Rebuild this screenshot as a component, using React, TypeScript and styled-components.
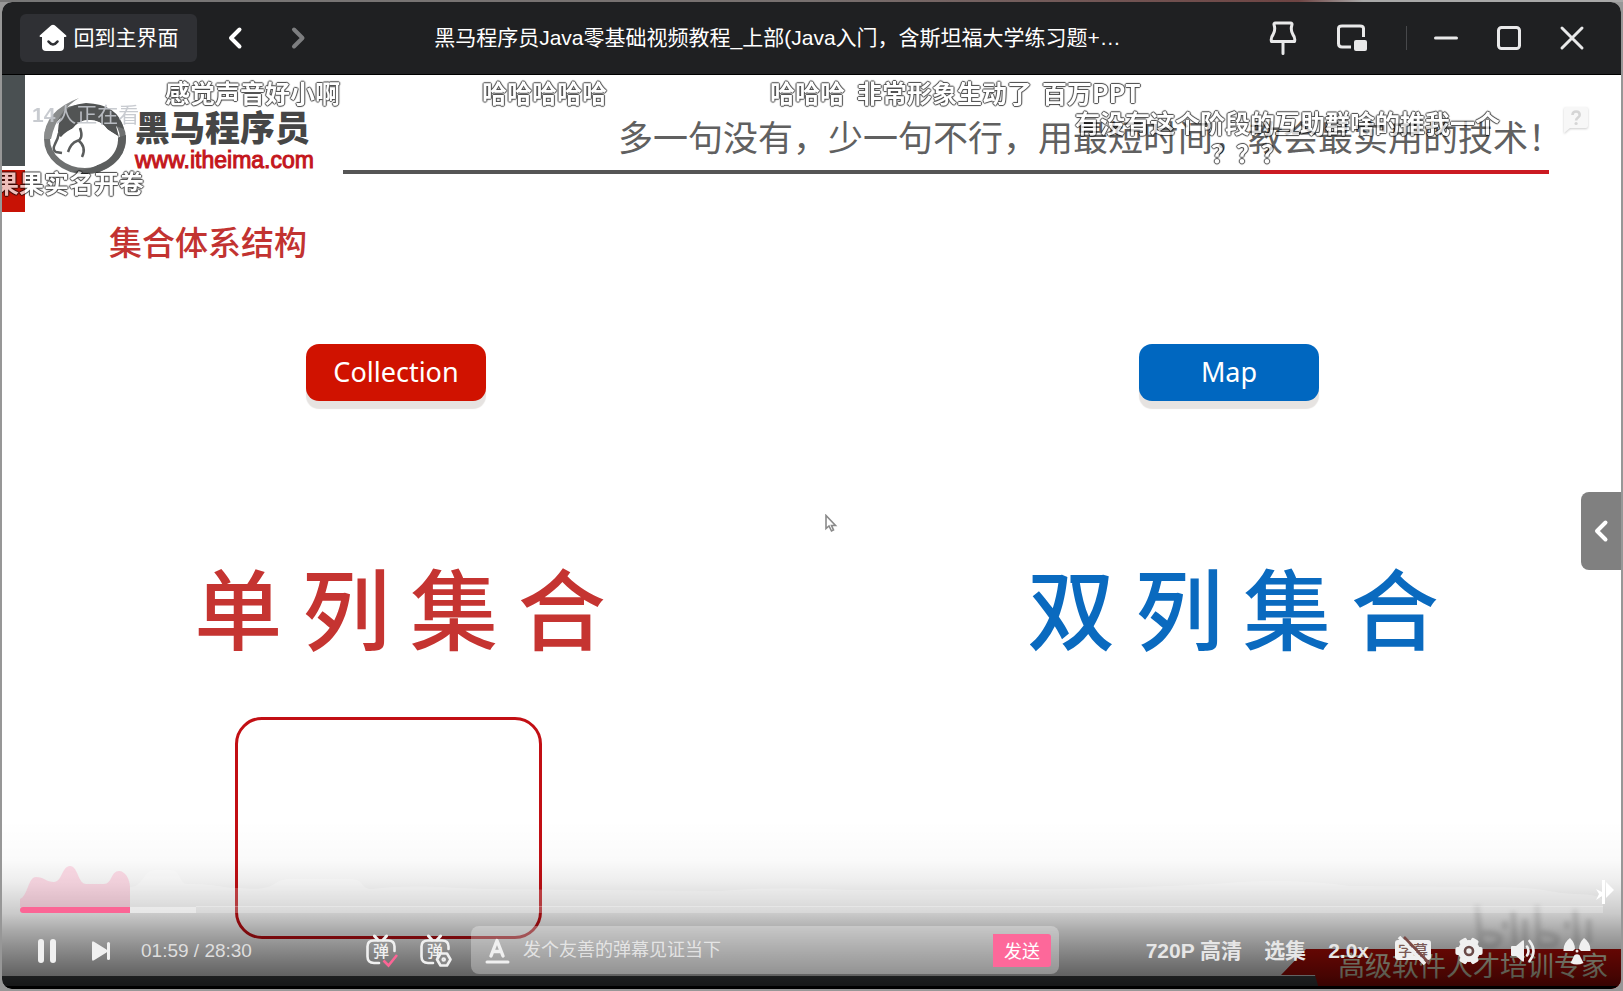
import React from "react";
import styled, { createGlobalStyle, css } from "styled-components";

const GlobalStyle = createGlobalStyle`
  *, *::before, *::after { box-sizing: border-box; }
  body {
    margin: 0;
    background: #979797;
    font-family: "Liberation Sans", "Noto Sans CJK SC", sans-serif;
  }
  button, input { font: inherit; color: inherit; margin: 0; }
`;

/* ---------- window ---------- */

const Desktop = styled.div`
  display: flex;
  min-height: 100vh;
  padding: 2px;
  background: linear-gradient(90deg, #777 0, #77706f 50%, #6e4443 80%, #a8a8a8 84%) top / 100% 2px no-repeat, #979797;
`;

const PlayerWindow = styled.div`
  flex: 1;
  min-width: 0;
  display: flex;
  flex-direction: column;
  border-radius: 10px;
  overflow: hidden;
  background: #fff;
`;

const TitleBar = styled.header`
  display: flex;
  align-items: center;
  height: 73px;
  flex: none;
  padding: 0 29px 1px 18px;
  background: #1f2022;
  border-bottom: 1px solid #000;
  color: #fff;
`;

const plainButton = css`
  display: flex;
  align-items: center;
  justify-content: center;
  padding: 0;
  border: 0;
  background: none;
  cursor: pointer;
`;

const HomeButton = styled.button`
  ${plainButton}
  width: 177px;
  height: 48px;
  gap: 7px;
  border-radius: 6px;
  background: #2f3034;
  color: #fff;
  font-size: 21px;
  line-height: 24px;
`;

const BarButton = styled.button`
  ${plainButton}
  width: 40px;
  height: 40px;
  color: #e9e9ea;
`;

const NavGroup = styled.nav`
  display: flex;
  gap: 23px;
  margin-left: 18px;
`;

const WindowTitle = styled.h1`
  flex: 1;
  min-width: 0;
  margin: 0;
  padding: 0 20px;
  overflow: hidden;
  white-space: nowrap;
  text-align: center;
  font-size: 21px;
  font-weight: 400;
  line-height: 28px;
`;

const ToolGroup = styled.div`
  display: flex;
  gap: 29px;
  padding: 0 34px 0 26px;
`;

const Divider = styled.span`
  width: 1px;
  height: 24px;
  margin-right: 19px;
  background: #47484b;
`;

const WindowButtons = styled.div`
  display: flex;
  gap: 23px;
`;

/* ---------- slide ---------- */

const Stage = styled.main`
  position: relative;
  flex: 1;
  display: flex;
  flex-direction: column;
  overflow: hidden;
  background: #fff;
`;

const SlideHead = styled.div`
  display: flex;
  height: 137px;
`;

const EdgeMarks = styled.div`
  width: 23px;
  display: flex;
  flex-direction: column;
  gap: 4px;
  &::before { content: ""; height: 91px; background: #4a5052; }
  &::after { content: ""; flex: 1; background: #c81205; }
`;

const Brand = styled.div`
  display: flex;
  width: 318px;
  gap: 7px;
  padding: 22px 0 0 17px;
`;

const BrandText = styled.div`
  padding-top: 13px;
`;

const BrandName = styled.div`
  color: #464646;
  font-size: 35px;
  font-weight: 900;
  line-height: 38px;
  white-space: nowrap;
`;

const BrandUrl = styled.div`
  color: #c4161c;
  font-size: 23px;
  line-height: 24px;
  -webkit-text-stroke: 1px #c4161c;
`;

const SloganBox = styled.div`
  flex: 1;
  min-width: 0;
  margin-right: 72px;
  padding-top: 37px;
`;

const Slogan = styled.p`
  margin: 0 0 10px;
  padding-left: 275px;
  color: #606060;
  font-family: "Noto Sans CJK SC", sans-serif;
  font-size: 35px;
  font-weight: 400;
  line-height: 48px;
  white-space: nowrap;
`;

const Rule = styled.div`
  height: 4px;
  background: linear-gradient(90deg, #555 76%, #cb1a22 76%);
`;

const SlideTitle = styled.h2`
  margin: 8px 0 0 107px;
  color: #c23331;
  font-size: 33px;
  font-weight: 500;
  line-height: 48px;
`;

const Columns = styled.div`
  flex: 1;
  display: flex;
  justify-content: space-between;
  padding: 76px 172px 0 174px;
`;

const Column = styled.section`
  width: 440px;
  display: flex;
  flex-direction: column;
  align-items: center;
`;

const TypeLabel = styled.div<{ $color: string }>`
  width: 180px;
  height: 57px;
  border-radius: 13px;
  background: ${(p) => p.$color};
  box-shadow: 0 8px 1px #e6e3e1;
  color: #fff;
  font-family: "Noto Sans", sans-serif;
  font-size: 27px;
  line-height: 56px;
  text-align: center;
`;

const Caption = styled.div<{ $color: string }>`
  margin-top: 154px;
  padding-left: 8px;
  color: ${(p) => p.$color};
  font-family: "Noto Sans CJK SC", sans-serif;
  font-size: 88px;
  font-weight: 500;
  line-height: 100px;
  white-space: nowrap;
`;

const EmptyBox = styled.div`
  width: 307px;
  height: 222px;
  margin: 62px 16px 0 0;
  border: 3px solid #c20f14;
  border-radius: 27px;
`;

const SlideFoot = styled.footer`
  display: flex;
  align-items: flex-end;
  justify-content: flex-end;
  height: 40px;
  background: linear-gradient(#4c5052, #4c5052) bottom / 100% 13px no-repeat;
`;

const Ribbon = styled.div`
  width: 340px;
  height: 40px;
  padding-left: 57px;
  background: #b80c06;
  clip-path: polygon(25px 0, 100% 0, 100% 100%, 38px 100%, 34px 26px, 0 26px);
  color: #e8e8cc;
  font-family: "Noto Sans CJK SC", sans-serif;
  font-size: 27px;
  font-weight: 400;
  line-height: 32px;
  white-space: nowrap;
`;

/* ---------- overlays ---------- */

const Danmaku = styled.span<{ $x: number; $row: number }>`
  position: absolute;
  left: ${(p) => p.$x}px;
  top: ${(p) => 2 + p.$row * 30}px;
  color: #fff;
  font-family: "Noto Sans CJK SC", sans-serif;
  font-size: 25px;
  font-weight: 700;
  line-height: 30px;
  white-space: nowrap;
  text-shadow: 1px 0 1px #000, 0 1px 1px #000, 0 -1px 1px #000, -1px 0 1px #000;
  opacity: 0.72;
`;

const Watching = styled.span`
  position: absolute;
  left: 30px;
  top: 28px;
  color: #c3c6cc;
  font-size: 21px;
  line-height: 24px;
  opacity: 0.9;
`;

const FeedbackButton = styled.button`
  ${plainButton}
  position: absolute;
  right: 32px;
  top: 31px;
  filter: drop-shadow(0 1px 1px #ccc);
`;

const SideTab = styled.button`
  ${plainButton}
  position: absolute;
  right: 0;
  top: 417px;
  width: 40px;
  height: 78px;
  border-radius: 8px 0 0 8px;
  background: #808080;
  color: #fff;
`;

const Pointer = styled.svg`
  position: absolute;
  left: 822px;
  top: 439px;
`;

const Watermark = styled.svg`
  position: absolute;
  right: 26px;
  bottom: 36px;
  filter: blur(2px);
`;

const PlayMark = styled.svg`
  position: absolute;
  right: 6px;
  bottom: 84px;
`;

const Controls = styled.div`
  position: absolute;
  left: 0;
  right: 0;
  bottom: 0;
  padding-top: 42px;
  border-bottom: 3px solid #000;
  background: linear-gradient(
    rgba(0, 0, 0, 0) 0,
    rgba(0, 0, 0, 0.02) 40px,
    rgba(0, 0, 0, 0.07) 62px,
    rgba(0, 0, 0, 0.15) 80px,
    rgba(0, 0, 0, 0.21) 94px,
    rgba(0, 0, 0, 0.34) 111px,
    rgba(0, 0, 0, 0.45) 128px,
    rgba(0, 0, 0, 0.62) 156px,
    rgba(0, 0, 0, 0.7) 166px
  );
`;

const Timeline = styled.div`
  display: flex;
  flex-direction: column;
  padding: 0 18px;
`;

const HeatMap = styled.svg`
  width: 100%;
  height: 45px;
`;

const Seek = styled.input<{ $played: number; $buffered: number }>`
  appearance: none;
  width: 100%;
  height: 6px;
  border-radius: 3px 0 0 3px;
  background: linear-gradient(
    90deg,
    #fb6595 ${(p) => p.$played}%,
    rgba(255, 255, 255, 0.55) ${(p) => p.$played}%,
    rgba(255, 255, 255, 0.55) ${(p) => p.$buffered}%,
    rgba(255, 255, 255, 0.26) ${(p) => p.$buffered}%
  );
  &::-webkit-slider-thumb { appearance: none; width: 0; height: 0; }
`;

const ControlRow = styled.div`
  display: flex;
  align-items: center;
  padding: 13px 28px 12px 31px;
  color: #f0f0f0;
`;

const PlayGroup = styled.div`
  display: flex;
  align-items: center;
  flex: 0 0 333px;
  gap: 26px;
`;

const IconButton = styled.button<{ $w?: number }>`
  ${plainButton}
  width: ${(p) => p.$w ?? 32}px;
  height: 36px;
  padding-top: 2px;
`;

const Clock = styled.span`
  color: #dedede;
  font-size: 19px;
  line-height: 24px;
  padding-top: 2px;
  white-space: nowrap;
`;

const DanmakuGroup = styled.div`
  display: flex;
  gap: 22px;
  margin-right: 19px;
`;

const SendForm = styled.form`
  display: flex;
  align-items: center;
  flex: 0 1 588px;
  min-width: 0;
  height: 48px;
  padding: 0 8px 0 12px;
  border-radius: 8px;
  background: rgba(255, 255, 255, 0.3);
`;

const SendInput = styled.input`
  flex: 1;
  min-width: 0;
  height: 32px;
  margin: 0 10px 0 12px;
  padding: 0;
  border: 0;
  outline: 0;
  background: none;
  font-size: 18px;
  &::placeholder { color: rgba(255, 255, 255, 0.68); opacity: 1; }
`;

const SendButton = styled.button`
  ${plainButton}
  width: 58px;
  height: 33px;
  border-radius: 0 3px 3px 0;
  background: #fd689a;
  color: #fff;
  font-size: 18px;
`;

const TextOptions = styled.div`
  display: flex;
  align-items: center;
  gap: 22px;
  margin-left: auto;
  margin-right: 26px;
`;

const IconOptions = styled.div`
  display: flex;
  align-items: center;
  gap: 22px;
`;

const TextButton = styled.button`
  ${plainButton}
  padding-top: 2px;
  color: #e6e6e6;
  font-size: 21px;
  font-weight: 700;
  line-height: 28px;
  white-space: nowrap;
`;

/* ---------- drawings ---------- */

const line = { fill: "none", stroke: "currentColor", strokeLinecap: "round", strokeLinejoin: "round" } as const;

const Chevron = ({ dir, color }: { dir: "left" | "right"; color: string }) => (
  <svg width="16" height="24" viewBox="0 0 16 24" {...line} stroke={color} strokeWidth="4" aria-hidden>
    <path d={dir === "left" ? "M12.500 3.500L4 12l8.500 8.500" : "M4 3.500L12.500 12 4 20.500"} />
  </svg>
);

const HomeIcon = () => (
  <svg width="28" height="28" viewBox="0 0 28 28" aria-hidden>
    <path d="M12.300 1.300q1.700-1.300 3.400 0L27 11.200q1.200 1.800-.800 1.900H25V23q0 4-4 4H7q-4 0-4-4v-9.900H1.800Q-.200 13 1 11.200z" fill="#fff" />
    <path d="M9.500 17.500q4.500 6 9 0" fill="none" stroke="#2f3034" strokeWidth="2.600" strokeLinecap="round" />
  </svg>
);

const PinIcon = () => (
  <svg width="28" height="36" viewBox="0 0 28 36" {...line} strokeWidth="3" aria-hidden>
    <path d="M6.500 3h15q2 0 1.400 2-1.600 5 1 9.500 2.600 3.500 1.600 7h-23q-1-3.500 1.600-7 2.600-4.500 1-9.500-.600-2 1.400-2zM14 22v11.500" />
  </svg>
);

const PipIcon = () => (
  <svg width="32" height="30" viewBox="0 0 32 30" aria-hidden>
    <path d="M15 24H6q-3.500 0-3.500-3.500v-15Q2.500 3 6 3h18q3.500 0 3.500 2.500V14" {...line} strokeWidth="3" strokeLinecap="butt" />
    <rect x="18" y="17" width="13" height="11" rx="2" fill="currentColor" />
  </svg>
);

const MinIcon = () => (
  <svg width="24" height="24" viewBox="0 0 24 24" {...line} strokeWidth="3" aria-hidden><path d="M1.500 12h21" /></svg>
);
const MaxIcon = () => (
  <svg width="26" height="26" viewBox="0 0 26 26" {...line} strokeWidth="3" aria-hidden><rect x="2.500" y="2.500" width="21" height="21" rx="3" /></svg>
);
const CloseIcon = () => (
  <svg width="26" height="26" viewBox="0 0 26 26" {...line} strokeWidth="3" aria-hidden><path d="M3 3l20 20M23 3L3 23" /></svg>
);

const HorseLogo = () => (
  <svg width="86" height="78" viewBox="0 0 86 78" aria-hidden>
    <ellipse cx="43" cy="42" rx="38" ry="32" fill="#fff" stroke="#6e7070" strokeWidth="6" />
    <path d="M84 38q1 26-27 37-14 4-27-1 38-1 41-32z" fill="#5c5e5e" />
    <path d="M16 34Q17 8 44 6q32 1 38 26l-8-3 3 11-12-8q-6-9-18-9-8 0-14 8-8 2-14 9-3-1-3-6z" fill="#525454" />
    <path d="M31 31q7-9 17-8 12 1 18 10l10 6q1 16-12 25-10 6-22 6-18-1-27-15 0-10 7-17z" fill="#fff" />
    <path d="M2 42Q2 14 37 1 15 14 9 42z" fill="#8a8c8c" />
    <path d="M17 36q-1 6-4 11-3 6 1 8l6 1M26 55q3-9 9-11 7-2 3-13M36 43q9 7 4 17" fill="none" stroke="#5a5c5c" strokeWidth="2.500" />
  </svg>
);

const FeedbackIcon = () => (
  <svg width="26" height="28" viewBox="0 0 26 28" aria-hidden>
    <path d="M3 1h20q2 0 2 2v17q0 2-2 2H7l-6 5V3q0-2 2-2z" fill="#f7f7f7" />
    <path d="M9.500 9q0-3.500 3.600-3.500T16.700 9c0 2.600-3.600 2.500-3.600 5.500" fill="none" stroke="#d5d5d5" strokeWidth="2.600" />
    <circle cx="13.100" cy="17.500" r="1.600" fill="#d5d5d5" />
  </svg>
);

const PauseIcon = () => (
  <svg width="20" height="24" viewBox="0 0 20 24" fill="currentColor" aria-hidden>
    <rect x="1" width="6" height="24" rx="3" /><rect x="13" width="6" height="24" rx="3" />
  </svg>
);

const NextIcon = () => (
  <svg width="20" height="20" viewBox="0 0 20 20" fill="currentColor" aria-hidden>
    <path d="M1 2q0-2.500 2-1.200l12.500 7.700q1.500 1.500 0 3L3 19.200Q1 20.500 1 18z" /><rect x="16" y="1" width="3" height="18" rx="1.500" />
  </svg>
);

const GlyphText = styled.text`
  font-family: "Noto Sans CJK SC", sans-serif;
  font-weight: 500;
`;

const DanmakuIcon = ({ mode }: { mode: "on" | "settings" }) => (
  <svg width="32" height="34" viewBox="0 0 32 34" aria-hidden>
    <g {...line} strokeWidth="3">
      <path d="M8.500 2l3.500 4M20.500 2L17 6" />
      <path
        d={`M13 29H8q-6.500 0-6.500-6.500v-10Q1.500 6.500 8 6.500h14q6.500 0 6.500 6V${mode === "on" ? 17 : 15}`}
        strokeWidth="2.600"
      />
    </g>
    <GlyphText x="7" y="23" fontSize="16" fill="currentColor">弹</GlyphText>
    {mode === "on" ? (
      <path d="M17.500 26.500l5 5L31 21" fill="none" stroke="#fb6595" strokeWidth="2.600" />
    ) : (
      <g {...line} strokeWidth="2.600">
        <path d="M20.500 19.500h6.500l3.500 6-3.500 6h-6.500L17 25.500z" fill="#888" /><circle cx="23.700" cy="25.500" r="1" />
      </g>
    )}
  </svg>
);

const FontIcon = () => (
  <svg width="26" height="26" viewBox="0 0 26 26" {...line} strokeWidth="3.400" aria-hidden>
    <path d="M7 18l6-15.500L19 18M9 13.500h8" /><path d="M3 24h21" strokeWidth="3" />
  </svg>
);

const SubtitleIcon = () => (
  <svg width="36" height="30" viewBox="0 0 36 30" aria-hidden>
    <rect y="4" width="36" height="20" rx="3" fill="currentColor" />
    <GlyphText x="3" y="20" fontSize="15" fill="#7a5a56">字幕</GlyphText>
    <path d="M9 1l25 26" stroke="#7a4a46" strokeWidth="2.600" />
    <path d="M4 1l26 27" stroke="currentColor" strokeWidth="3.600" />
  </svg>
);

const GearIcon = () => (
  <svg width="28" height="28" viewBox="0 0 28 28" aria-hidden>
    <g fill="currentColor">
      <circle cx="14" cy="14" r="11" />
      {[30, 90, 150, 210, 270, 330].map((a) => (
        <rect key={a} x="10" y="0.400" width="8" height="8" rx="2" transform={`rotate(${a} 14 14)`} />
      ))}
    </g>
    <circle cx="14" cy="14" r="4" fill="none" stroke="#6a4a48" strokeWidth="2.600" />
  </svg>
);

const VolumeIcon = () => (
  <svg width="28" height="26" viewBox="0 0 28 26" aria-hidden>
    <path d="M2 9q0-1 1-1h4l6-5q2-1.500 2 .500v19q0 2-2 .500l-6-5H3q-1 0-1-1z" fill="currentColor" />
    <path d="M18 8.500q3 4.500 0 9M20.500 3q8 10 0 20" {...line} strokeWidth="2.600" />
  </svg>
);

const FanIcon = () => (
  <svg width="30" height="28" viewBox="0 0 30 28" fill="currentColor" aria-hidden>
    <path d="M8 1q5 5 5 11l-2 2H1.500Q1 6 8 1zM22 1q-5 5-5 11l2 2h9.500Q29 6 22 1zM12.500 18q2.500-1.500 5 0l4 8q-6.500 3-13 0z" />
    <circle cx="15" cy="14" r="1.500" />
  </svg>
);

const Heat = () => (
  <HeatMap viewBox="0 0 1583 45" preserveAspectRatio="none" aria-hidden>
    <path d="M0 37C8 34 8 15 16 15C24 15 26 20 34 20C42 20 42 4 50 4C58 4 58 22 66 22H84C92 22 91 9 99 9C105 9 110 17 110 25V45H0z" fill="#fb6595" fillOpacity="0.220" />
    <path d="M110 25C124 25 122 8 136 8H150C162 8 158 22 168 22C200 22 200 26 220 26C260 30 250 17 270 17H330C345 17 340 27 352 27C400 22 420 26 470 27L700 29Q760 24 830 28L1060 27Q1170 24 1220 20Q1280 17 1330 24L1480 25C1530 26 1530 31 1555 32Q1583 32 1583 40V45H110z" fill="#fff" fillOpacity="0.200" />
    <path d="M176 44.500H1583" stroke="#fff" strokeOpacity="0.300" />
  </HeatMap>
);

const comments = [
  { text: "感觉声音好小啊", x: 163, row: 0 },
  { text: "哈哈哈哈哈", x: 480, row: 0 },
  { text: "哈哈哈", x: 768, row: 0 },
  { text: "非常形象生动了", x: 855, row: 0 },
  { text: "百万PPT", x: 1040, row: 0 },
  { text: "有没有这个阶段的互助群啥的推我一个", x: 1073, row: 1 },
  { text: "？？？", x: 1209, row: 2 },
  { text: "果果实名开卷", x: -8, row: 3 },
];

const DURATION = 1710;
const POSITION = 119;

export default function App() {
  return (
    <>
      <GlobalStyle />
      <Desktop lang="zh-CN">
        <PlayerWindow>
          <TitleBar>
            <HomeButton><HomeIcon />回到主界面</HomeButton>
            <NavGroup>
              <BarButton aria-label="后退"><Chevron dir="left" color="#fff" /></BarButton>
              <BarButton aria-label="前进"><Chevron dir="right" color="#7d7e80" /></BarButton>
            </NavGroup>
            <WindowTitle>黑马程序员Java零基础视频教程_上部(Java入门，含斯坦福大学练习题+…</WindowTitle>
            <ToolGroup>
              <BarButton aria-label="置顶"><PinIcon /></BarButton>
              <BarButton aria-label="小窗"><PipIcon /></BarButton>
            </ToolGroup>
            <Divider />
            <WindowButtons>
              <BarButton aria-label="最小化"><MinIcon /></BarButton>
              <BarButton aria-label="最大化"><MaxIcon /></BarButton>
              <BarButton aria-label="关闭"><CloseIcon /></BarButton>
            </WindowButtons>
          </TitleBar>

          <Stage>
            <SlideHead>
              <EdgeMarks />
              <Brand>
                <HorseLogo />
                <BrandText>
                  <BrandName>黑马程序员</BrandName>
                  <BrandUrl>www.itheima.com</BrandUrl>
                </BrandText>
              </Brand>
              <SloganBox>
                <Slogan>多一句没有，少一句不行，用最短时间，教会最实用的技术！</Slogan>
                <Rule />
              </SloganBox>
            </SlideHead>
            <SlideTitle>集合体系结构</SlideTitle>
            <Columns>
              <Column>
                <TypeLabel $color="#d01200">Collection</TypeLabel>
                <Caption $color="#c53431">单 列 集 合</Caption>
                <EmptyBox />
              </Column>
              <Column>
                <TypeLabel $color="#0067c0">Map</TypeLabel>
                <Caption $color="#0a6abf">双 列 集 合</Caption>
              </Column>
            </Columns>
            <SlideFoot>
              <Ribbon>高级软件人才培训专家</Ribbon>
            </SlideFoot>

            <Watermark width="124" height="50" viewBox="0 0 124 50" fill="none" stroke="#777" strokeOpacity="0.220" strokeWidth="6" aria-hidden>
              <path d="M6 2l4 40q14 4 18-4t-16-8M42 8l2 34M54 16v24M66 2l2 40q16 2 18-4t-16-8M104 6l2 36M118 16v24M34 18v8M96 18v8" />
            </Watermark>
            <Pointer width="14" height="20" viewBox="0 0 14 20" aria-hidden>
              <path d="M2 1.500v13l3-2.500 2.500 5 2-1-2-4.500h4z" fill="#fff" stroke="#8a8a8a" strokeWidth="1.600" />
            </Pointer>

            <Watching><b>14</b>人正在看</Watching>
            {comments.map((c) => (
              <Danmaku key={c.text} $x={c.x} $row={c.row}>{c.text}</Danmaku>
            ))}
            <FeedbackButton aria-label="反馈"><FeedbackIcon /></FeedbackButton>
            <SideTab aria-label="展开侧栏"><Chevron dir="left" color="#fff" /></SideTab>

            <Controls>
              <Timeline>
                <Heat />
                <Seek
                  type="range"
                  aria-label="播放进度"
                  min={0}
                  max={DURATION}
                  defaultValue={POSITION}
                  $played={(POSITION / DURATION) * 100}
                  $buffered={11.1}
                />
              </Timeline>
              <ControlRow>
                <PlayGroup>
                  <IconButton $w={28} aria-label="暂停"><PauseIcon /></IconButton>
                  <IconButton $w={28} aria-label="下一集"><NextIcon /></IconButton>
                  <Clock>01:59 / 28:30</Clock>
                </PlayGroup>
                <DanmakuGroup>
                  <IconButton aria-label="关闭弹幕"><DanmakuIcon mode="on" /></IconButton>
                  <IconButton aria-label="弹幕设置"><DanmakuIcon mode="settings" /></IconButton>
                </DanmakuGroup>
                <SendForm onSubmit={(e) => e.preventDefault()}>
                  <IconButton type="button" $w={28} aria-label="字体"><FontIcon /></IconButton>
                  <SendInput aria-label="弹幕" placeholder="发个友善的弹幕见证当下" />
                  <SendButton type="submit">发送</SendButton>
                </SendForm>
                <TextOptions>
                  <TextButton>720P 高清</TextButton>
                  <TextButton>选集</TextButton>
                  <TextButton>2.0x</TextButton>
                </TextOptions>
                <IconOptions>
                  <IconButton $w={36} aria-label="开启字幕"><SubtitleIcon /></IconButton>
                  <IconButton aria-label="设置"><GearIcon /></IconButton>
                  <IconButton aria-label="音量"><VolumeIcon /></IconButton>
                  <IconButton aria-label="清爽模式"><FanIcon /></IconButton>
                </IconOptions>
              </ControlRow>
            </Controls>
            <PlayMark width="20" height="26" viewBox="0 0 20 26" fill="#fff" aria-hidden>
              <path d="M7 1h3v24H7zM11 3l8 8-8 8zM1 10l6 3v4l-6 4 3-6z" />
            </PlayMark>
          </Stage>
        </PlayerWindow>
      </Desktop>
    </>
  );
}
